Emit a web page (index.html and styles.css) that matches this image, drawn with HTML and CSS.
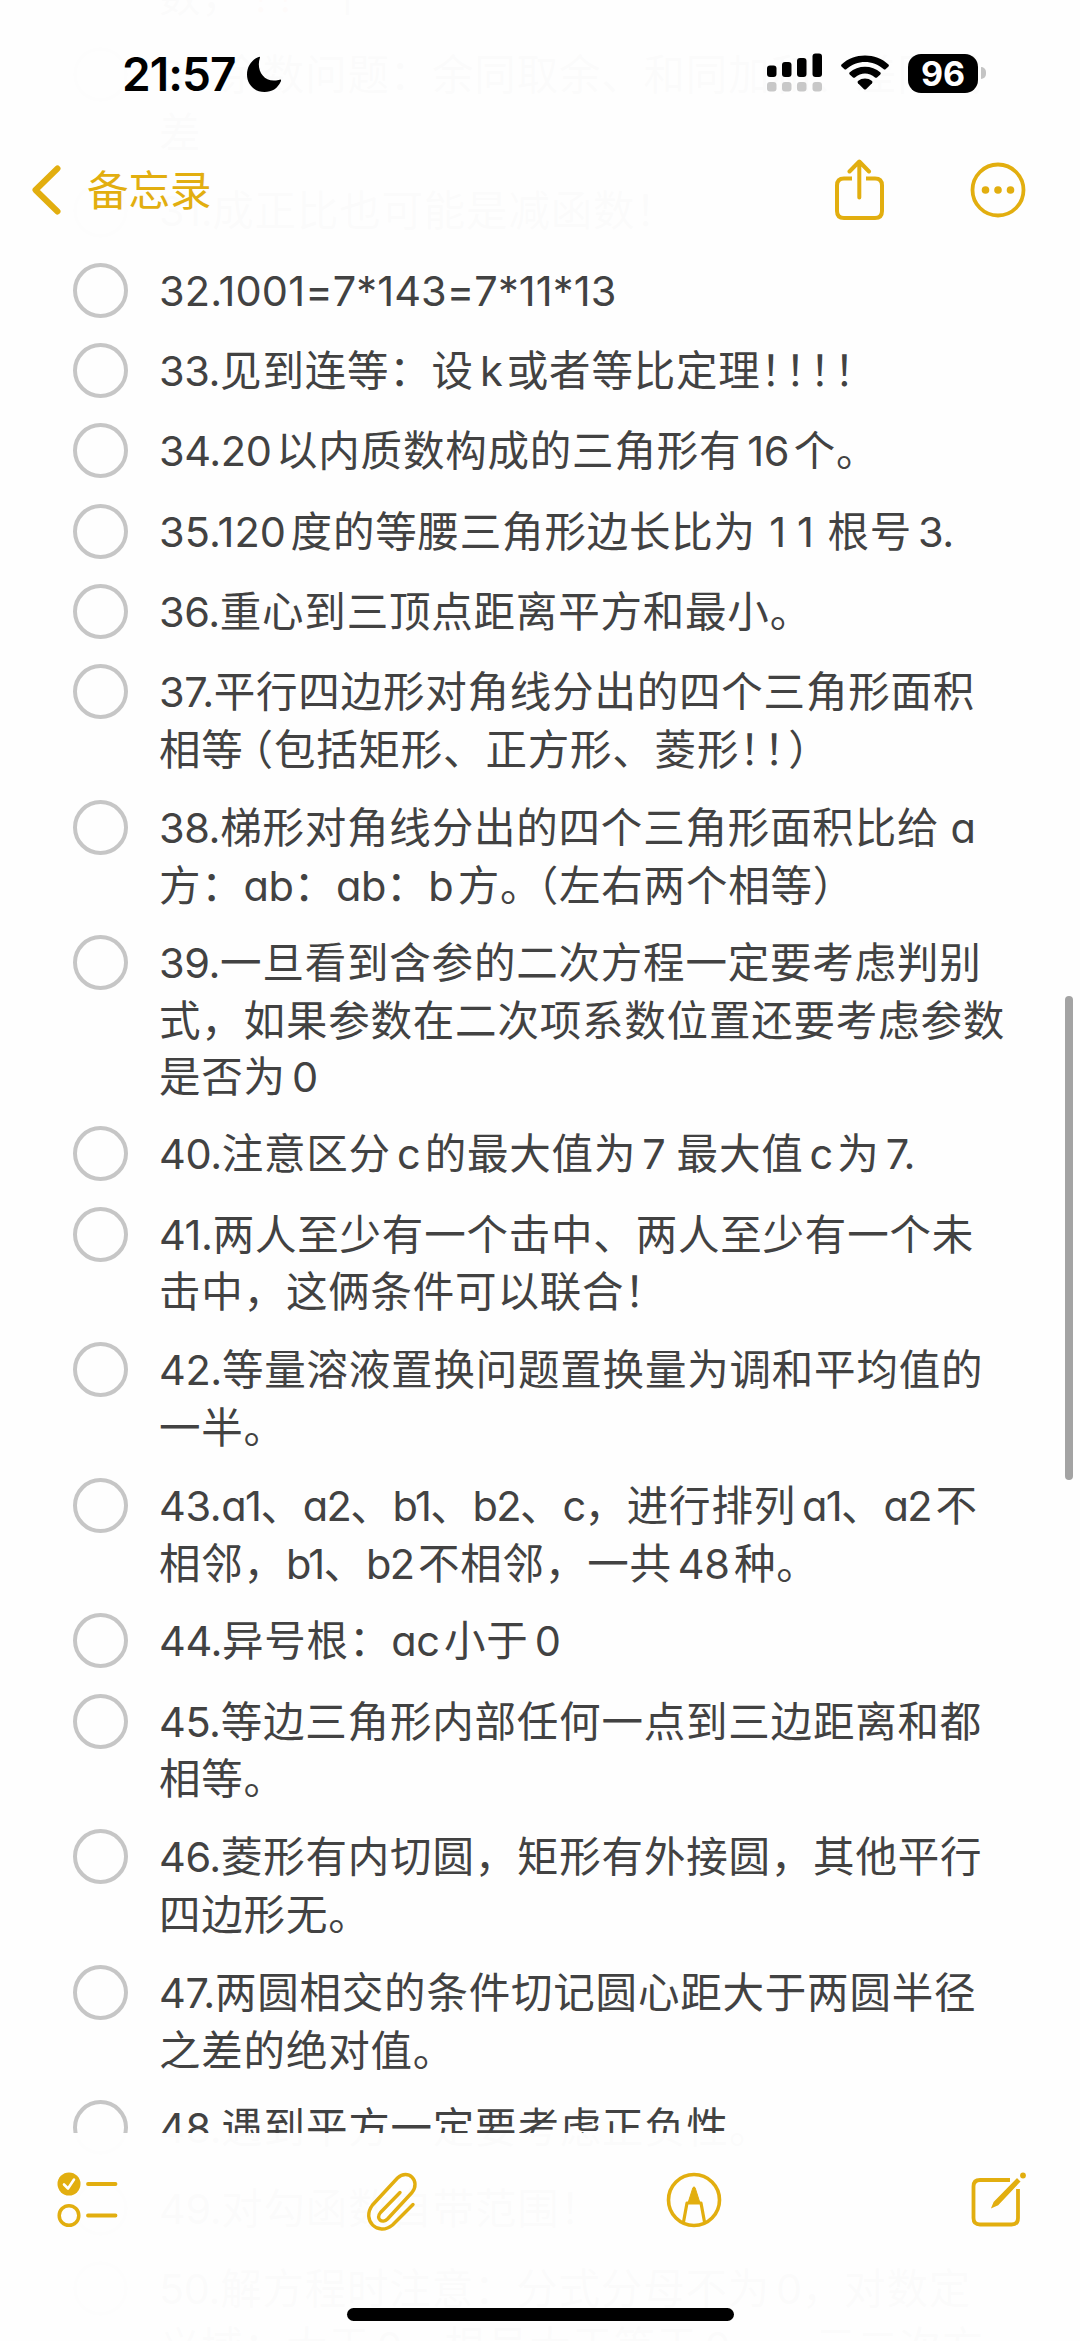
FILE: index.html
```html
<!DOCTYPE html>
<html lang="zh-CN">
<head>
    <meta charset="UTF-8">
    <meta name="viewport" content="width=device-width, initial-scale=1.0">
    <title>备忘录</title>
    <link rel="stylesheet" href="styles.css">
</head>
<body>
    <div class="screen">
        <ul class="notes">
            <li><span class="circle"></span><div class="text"><p><i>29.</i>比例尺</p><p>数，<b>！！</b>个</p></div></li>
            <li><span class="circle"></span><div class="text"><p><i>30.</i>余数问题：余同取余、和同加和、差同减</p><p>差</p></div></li>
            <li><span class="circle"></span><div class="text"><p><i>31.</i>成正比也可能是减函数！</p></div></li>
            <li><span class="circle"></span><div class="text"><p><i class="sum">32.1001=7*143=7*11*13</i></p></div></li>
            <li><span class="circle"></span><div class="text"><p><i>33.</i>见到连等：设<i class="mid">k</i>或者等比定理<s>！！！！</s></p></div></li>
            <li><span class="circle"></span><div class="text"><p><i class="post">34.20</i>以内质数构成的三角形有<i class="mid">16</i>个。</p></div></li>
            <li><span class="circle"></span><div class="text"><p><i class="post sum">35.120</i>度的等腰三角形边长比为<i class="wide"> 1 1</i>根号<i class="pre">3.</i></p></div></li>
            <li><span class="circle"></span><div class="text"><p><i>36.</i>重心到三顶点距离平方和最小。</p></div></li>
            <li><span class="circle"></span><div class="text"><p><i>37.</i>平行四边形对角线分出的四个三角形面积</p><p>相等<em>（</em>包括矩形、正方形、菱形<s>！！</s>）</p></div></li>
            <li><span class="circle"></span><div class="text"><p><i>38.</i>梯形对角线分出的四个三角形面积比给<i> a</i></p><p>方：<i>ab</i>：<i>ab</i>：<i class="post">b</i>方。<em class="tight">（</em>左右两个相等）</p></div></li>
            <li><span class="circle"></span><div class="text"><p><i>39.</i>一旦看到含参的二次方程一定要考虑判别</p><p>式，如果参数在二次项系数位置还要考虑参数</p><p>是否为<i class="pre">0</i></p></div></li>
            <li><span class="circle"></span><div class="text"><p><i>40.</i>注意区分<i class="mid">c</i>的最大值为<i class="pre">7 </i>最大值<i class="mid">c</i>为<i class="pre">7.</i></p></div></li>
            <li><span class="circle"></span><div class="text"><p><i>41.</i>两人至少有一个击中、两人至少有一个未</p><p>击中，这俩条件可以联合！</p></div></li>
            <li><span class="circle"></span><div class="text"><p><i>42.</i>等量溶液置换问题置换量为调和平均值的</p><p>一半。</p></div></li>
            <li><span class="circle"></span><div class="text"><p><i>43.</i><i class="pair">a1</i>、<i class="pair">a2</i>、<i class="pair">b1</i>、<i class="pair">b2</i>、<i class="pair">c</i>，进行排列<i class="pair pre">a1</i>、<i class="pair post">a2</i>不</p><p>相邻，<i class="pair">b1</i>、<i class="pair post">b2</i>不相邻，一共<i class="mid">48</i>种。</p></div></li>
            <li><span class="circle"></span><div class="text"><p><i>44.</i>异号根：<i class="post">ac</i>小于<i class="pre">0</i></p></div></li>
            <li><span class="circle"></span><div class="text"><p><i>45.</i>等边三角形内部任何一点到三边距离和都</p><p>相等。</p></div></li>
            <li><span class="circle"></span><div class="text"><p><i>46.</i>菱形有内切圆，矩形有外接圆，其他平行</p><p>四边形无。</p></div></li>
            <li><span class="circle"></span><div class="text"><p><i>47.</i>两圆相交的条件切记圆心距大于两圆半径</p><p>之差的绝对值。</p></div></li>
            <li><span class="circle"></span><div class="text"><p><i>48.</i>遇到平方一定要考虑正负性。</p></div></li>
            <li><span class="circle"></span><div class="text"><p><i>49.</i>对勾函数自带范围！</p></div></li>
            <li><span class="circle"></span><div class="text"><p><i>50.</i>解方程时注意：分式分母不为<i class="pre">0</i>，对数定</p><p>义域：大于<i class="pre">0</i>，根号大于等于<i class="pre">0</i>，一元二次方</p></div></li>
        </ul>

        <header class="top">
            <div class="status">
                <span class="time">21:57</span>
                <svg class="moon" width="36" height="38" viewBox="0 0 36 38"><path d="M14 1.5C10 13 16.500 26 30 24.500Q33 24 34.500 23.500Q35.500 23.800 34.800 25.500C31.500 32.500 26 36 18.500 36C8.500 36 1 28.500 1 18.500C1 10.500 5.500 4 12 1.200Q14.500 .3 14 1.500Z"/></svg>
                <svg class="signal" width="56" height="40" viewBox="0 0 56 40">
                    <rect x="0" y="12.500" width="9.500" height="11.500" rx="3"/><rect x="15" y="9" width="9.500" height="15" rx="3"/><rect x="30" y="5" width="9.500" height="19" rx="3"/><rect x="45.500" y="0.500" width="9.500" height="23.500" rx="3"/>
                    <g fill="#c8c8c8"><rect x="0" y="29" width="9.500" height="9.500" rx="3"/><rect x="15" y="29" width="9.500" height="9.500" rx="3"/><rect x="30" y="29" width="9.500" height="9.500" rx="3"/><rect x="45.500" y="29" width="9.500" height="9.500" rx="3"/></g>
                </svg>
                <svg class="wifi" width="50" height="38" viewBox="0 0 50 38">
                    <path d="M1.500 10.500C14-1.500 36-1.500 48.500 10.500Q49.300 11.500 48.500 12.500L45.500 15.200Q44.500 16 43.500 15C33 5.500 17 5.500 6.500 15Q5.500 16 4.500 15.200L1.500 12.500Q.7 11.500 1.500 10.500Z"/>
                    <path d="M9.500 18.500C18 10.800 32 10.800 40.500 18.500Q41.200 19.500 40.300 20.500L37 23.500Q36 24.200 35 23.500C29 18.200 21 18.200 15 23.500Q14 24.200 13 23.500L9.700 20.500Q8.800 19.500 9.500 18.500Z"/>
                    <path d="M18 27C22 23.700 28 23.700 32 27Q33 28 32 29.200L26 35.200Q25 36 24 35.200L18 29.200Q17 28 18 27Z"/>
                </svg>
                <span class="battery">96</span>
                <span class="battery-tip"></span>
            </div>
            <div class="nav">
                <svg class="back" width="29" height="50" viewBox="0 0 29 50"><path d="M25.500 3.500L3.500 25L25.500 46.500" stroke-width="6"/></svg>
                <span class="title">备忘录</span>
                <svg class="share" width="49" height="62" viewBox="0 0 49 62"><path d="M17 19.500H9Q2 19.500 2 26.500V52Q2 59 9 59H40Q47 59 47 52V26.500Q47 19.500 40 19.500H31" stroke-width="4" stroke-linecap="butt"/><path d="M24.300 38.500V3M14.500 12.500L24.300 2.500L34 12.500" stroke-width="4"/></svg>
                <svg class="more" width="56" height="56" viewBox="0 0 56 56"><circle cx="28" cy="28" r="25.500" stroke-width="3.800"/><g fill="#e2ae0f" stroke="none"><circle cx="15.500" cy="28" r="3.800"/><circle cx="28" cy="28" r="3.800"/><circle cx="40.500" cy="28" r="3.800"/></g></svg>
            </div>
        </header>

        <div class="scrollbar"></div>

        <footer class="bottom">
            <div class="tools">
                <svg class="checklist" width="62" height="56" viewBox="0 0 62 56">
                    <circle cx="12" cy="12" r="11.500" fill="#e2ae0f" stroke="none"/><path d="M7 12.500L11 16.500L17 7.500" stroke="#fff" stroke-width="2.600"/>
                    <circle cx="12" cy="43.500" r="9.800" stroke-width="3.500"/><path d="M31 12H58.500M31 43.500H58.500" stroke-width="3.800"/>
                </svg>
                <svg class="clip" width="54" height="60" viewBox="0 0 54 60"><path d="M34 20.500L14.500 40.500C9 47 16.500 52 21.500 47L46 20.500C55 9 42-4 31.500 6L6.500 33C-5 48 12 65 26.500 53L47 32.500" stroke-width="3.400"/></svg>
                <svg class="pen" width="56" height="56" viewBox="0 0 56 56"><circle cx="28" cy="28" r="25.500" stroke-width="3.600"/><path d="M17.500 50L21 31H35L38.500 50" stroke-width="3.200"/><path d="M22 31L26.800 16Q28 13.500 29.200 16L34 31Z" fill="#e2ae0f" stroke-width="1"/></svg>
                <svg class="compose" width="56" height="56" viewBox="0 0 56 56"><path d="M39 8H9Q2.500 8 2.500 14.500V46Q2.500 52.500 9 52.500H40.500Q47 52.500 47 46V17" stroke-width="3.800" stroke-linecap="butt"/><path d="M46 5L50.500 9.500L27.500 34L18.500 38L22 29.500Z" fill="#e2ae0f" stroke="#fefefe" stroke-width="1.500"/><circle cx="52" cy="3.500" r="2.900" fill="#e2ae0f" stroke="none"/></svg>
            </div>
            <div class="home"></div>
        </footer>
    </div>
</body>
</html>
```
FILE: styles.css
```css
* {
    box-sizing: border-box;
    margin: 0;
    padding: 0;
}
body {
    background-color: #fefefe;
    font-family: Inter, "Noto Sans CJK SC", sans-serif;
}
.screen {
    position: relative;
    width: 1080px;
    height: 2341px;
    overflow: hidden;
}

/* note list, runs under both bars */
.notes {
    list-style: none;
    margin-top: -88.600px;
}
.notes li {
    display: flex;
    padding: 0 0 22.400px 73px;
}
.circle {
    width: 55px;
    height: 55px;
    border: 4px solid #c6c6c6;
    border-radius: 50%;
    margin-right: 31px;
    flex: none;
}
.text {
    padding-top: 1px;
    margin-bottom: -1px;
}
.text p {
    height: 55.300px;
    line-height: 55.300px;
    font-size: 41.500px;
    letter-spacing: 0.800px;
    color: #424242;
    white-space: pre;
    font-feature-settings: "cv11";
    text-autospace: no-autospace;
}
.text p:first-child {
    margin-bottom: 2.600px;
}

/* latin runs */
.text i {
    font-style: normal;
    letter-spacing: -0.400px;
}
.text .sum {
    letter-spacing: 0.100px;
}
.text .pair {
    letter-spacing: -1.600px;
}
.text .pre, .text .mid {
    margin-left: 6px;
}
.text .post, .text .mid {
    margin-right: 4.500px;
}
.text .wide {
    margin: 0 14px 0 2px;
}

/* narrow full-width marks */
.text s, .text b {
    font-weight: 400;
    text-decoration: none;
    letter-spacing: -17px;
}
.text b {
    color: #e0402a;
    margin: 0 27px 0 7px;
}
.text em {
    font-style: normal;
    margin-left: -12px;
}
.text .tight {
    margin-left: -5px;
}

/* bars */
.top, .bottom {
    position: absolute;
    left: 0;
    width: 1080px;
    background-color: rgba(254, 254, 254, 0.985);
}
.top {
    top: 0;
    height: 244px;
}
.bottom {
    top: 2133px;
    height: 208px;
}
.top svg, .bottom svg {
    flex: none;
}
.status {
    display: flex;
    height: 110px;
    padding: 53px 0 0 122px;
}
.time {
    width: 120px;
    margin-top: -2px;
    font-size: 46px;
    line-height: 46px;
    font-weight: 600;
    letter-spacing: -0.900px;
}
.moon {
    margin: 3px 0 0 4px;
}
.signal {
    margin-left: 485px;
}
.wifi {
    margin: 1px 0 0 17px;
}
.battery {
    width: 70px;
    height: 39px;
    margin: 1px 0 0 18px;
    border-radius: 13px;
    background-color: #000;
    color: #fff;
    font-size: 34px;
    line-height: 39px;
    font-weight: 700;
    text-align: center;
}
.battery-tip {
    width: 5px;
    height: 12px;
    margin: 14px 0 0 3px;
    border-radius: 0 6px 6px 0;
    background-color: #c4c4c4;
}
.nav {
    display: flex;
    padding-left: 32px;
}
.nav svg, .tools svg {
    fill: none;
    stroke: #e2ae0f;
    stroke-linecap: round;
    stroke-linejoin: round;
}
.back {
    margin-top: 55px;
}
.title {
    width: 748px;
    padding-left: 26px;
    margin-top: 51px;
    font-size: 41.500px;
    line-height: 60px;
    color: #e2ae0f;
}
.share {
    margin: 49px 0 0 26px;
}
.more {
    margin: 52px 0 0 86px;
}
.scrollbar {
    position: absolute;
    top: 996px;
    left: 1065px;
    width: 8px;
    height: 484px;
    border-radius: 4px;
    background-color: #a3a3a3;
}
.tools {
    display: flex;
    height: 175px;
    padding: 39px 0 0 57px;
}
.clip {
    margin-left: 247px;
}
.pen {
    margin-left: 246px;
}
.compose {
    margin-left: 249px;
}
.home {
    width: 387px;
    height: 13px;
    margin: 0 auto;
    border-radius: 6.500px;
    background-color: #000;
}
```
